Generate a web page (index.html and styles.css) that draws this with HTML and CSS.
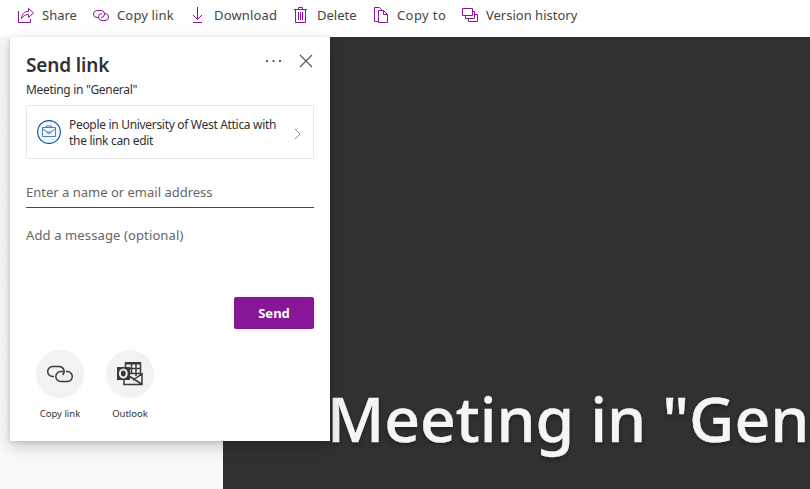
FILE: index.html
```html
<!DOCTYPE html>
<html lang="en">
<head>
<meta charset="utf-8">
<title>Send link</title>
<link rel="stylesheet" href="styles.css">
</head>
<body>
<nav class="toolbar">
  <a class="tool"><svg viewBox="0 0 16 16"><path d="M.5 4v11.500h12V12M3.500 11.500C4 7 6 4.500 10.500 4.500V1.500L15.500 6l-5 4.500v-3C7.500 7.500 5.500 8.500 3.500 11.500z"/></svg><span>Share</span></a>
  <a class="tool"><svg viewBox="0 0 16 16"><path d="M5 10.500H4A3.500 3.500 0 0 1 4 3.500h4a3.500 3.500 0 0 1 0 7M11 6.500h1a3.500 3.500 0 0 1 0 7H9a3.500 3.500 0 0 1 0-7"/></svg><span class="t-link">Copy link</span></a>
  <a class="tool"><svg viewBox="0 0 16 16"><path d="M7.500 0v12M3 8l4.500 4.500L12 8M3 15.500h9"/></svg><span class="t-link">Download</span></a>
  <a class="tool"><svg viewBox="0 0 16 16"><path d="M1 2.500h13M5.500 2.500v-2h4v2M2.500 2.500v13h10v-13M5.500 5v8M7.500 5v8M9.500 5v8"/></svg><span>Delete</span></a>
  <a class="tool"><svg viewBox="0 0 16 16"><path d="M5 14.500H1.500V.500h5l3 3M5.500 3.500h5l4 4v8h-9zM10.500 3.500v4h4"/></svg><span class="t-copy">Copy to</span></a>
  <a class="tool"><svg viewBox="0 0 16 16"><path d="M.5 1.500h10v7H.5zM3.500 8.500v3h9v-7h-2M6.500 11.500v3h9v-7h-3"/></svg><span>Version history</span></a>
</nav>
<main class="stage">
  <section class="preview"><h1 class="preview-title">Meeting in "Gen</h1></section>
  <section class="dialog">
    <header class="dialog-head">
      <h2 class="title">Send link</h2>
      <svg class="more" viewBox="0 0 16 4"><path d="M0 1h2v2H0zM6.500 1h2v2h-2zM13 1h2v2h-2z"/></svg>
      <svg class="close" viewBox="0 0 14 14"><path d="M1 1l12 12M13 1L1 13"/></svg>
    </header>
    <p class="file">Meeting in "General"</p>
    <div class="scope">
      <svg class="badge" viewBox="0 0 24 24"><circle cx="12" cy="12" r="11.400"/><path d="M5.500 7.500h13v9h-13zM9.500 7.500V6h5v1.500M5.500 8.500L10 12h4l4.500-3.500M10 12c0 2 4 2 4 0"/></svg>
      <p class="scope-text">People in University of West Attica with<br>the link can edit</p>
      <svg class="chevron" viewBox="0 0 7 12"><path d="M1 1l5 5-5 5"/></svg>
    </div>
    <div class="field">Enter a name or email address</div>
    <div class="message">Add a message (optional)</div>
    <button class="send">Send</button>
    <div class="actions">
      <div class="action">
        <span class="circle"><svg class="chain" viewBox="0 0 28 18"><path d="M8 11.500H6.700A5 5 0 0 1 6.700 1.500h6.500a5 5 0 0 1 3.500 8.500M20 6.500h1.300a5 5 0 0 1 0 10h-6.500a5 5 0 0 1 0-10H17"/></svg></span>
        <span>Copy link</span>
      </div>
      <div class="action">
        <span class="circle"><svg class="outlook" viewBox="0 0 28 24"><path class="line" d="M9.500 5V1h15v13M14 6.500h10M14 11.500h10M15.500 1v11M20 1v13M8 14v8.500h18V12l-9 6M13 14l12.500 8"/><path class="solid" d="M9 0h16v2.500H9zM1 5h13v13H1z"/><ellipse class="ring" cx="7.300" cy="11.500" rx="3.400" ry="4"/></svg></span>
        <span>Outlook</span>
      </div>
    </div>
  </section>
</main>
</body>
</html>
```
FILE: styles.css
```css
* { box-sizing: border-box; }
body { margin: 0; width: 810px; height: 489px; overflow: hidden; background: #fff; color: #323130; font-family: "Noto Sans", "Open Sans", sans-serif; }
h1, h2, p { margin: 0; font-weight: 400; }
svg { display: block; fill: none; flex: none; }
span { white-space: nowrap; }
.toolbar { height: 37px; padding: 7px 0 0 18px; display: grid; grid-template-columns: 75px 97px 103px 80px 89px 120px; align-items: start; font-size: 13px; line-height: 17px; }
.tool { display: flex; gap: 8px; color: #444; }
.tool svg { width: 16px; height: 16px; stroke: #881798; stroke-width: 1; }
.t-link { letter-spacing: .15px; }
.t-copy { letter-spacing: .4px; }
.stage { height: 452px; display: grid; grid-template-columns: 223px 587px; background: linear-gradient(#f7f6f4, #faf9f8); position: relative; }
.preview { grid-column: 2; background: #323032; overflow: hidden; padding: 333px 0 0 104px; }
.preview-title { color: #f5f5f6; font-size: 62.500px; line-height: 96px; font-weight: 500; letter-spacing: -.1px; white-space: nowrap; -webkit-text-stroke: .4px #f5f5f6; text-shadow: 0 2px 4px #202021; }
.dialog { position: absolute; left: 10px; top: 0; width: 320px; height: 404px; padding: 12px 16px; background: #fff; box-shadow: 0 6px 14px rgba(0,0,0,.18), 0 1px 4px rgba(0,0,0,.14); }
.dialog-head { display: flex; height: 32px; align-items: center; }
.title { font-size: 19px; font-weight: 600; line-height: 32px; flex: 1; white-space: nowrap; letter-spacing: -.15px; }
.more { width: 16px; height: 4px; margin: -8px 17px 0 0; fill: #605e5c; }
.close { width: 14px; height: 14px; margin: -8px 1px 0 0; stroke: #555; stroke-width: 1.1; }
.file { font-size: 12px; line-height: 17px; letter-spacing: -.32px; }
.scope { margin-top: 7px; height: 54px; border: 1px solid #e6e6e6; border-radius: 2px; display: flex; align-items: center; padding: 0 12px 0 10px; }
.badge { width: 24px; height: 24px; stroke: #0b5394; fill: #eff6fc; stroke-width: 1.1; }
.badge path { stroke-width: .9; stroke: #3b73a8; }
.scope-text { margin: 2px 0 0 8px; font-size: 12px; line-height: 16px; letter-spacing: -.31px; flex: 1; white-space: nowrap; }
.chevron { width: 7px; height: 12px; margin-top: 4px; stroke: #8a8886; }
.field { margin-top: 17px; height: 32px; border-bottom: 1px solid #881798; font-size: 13px; line-height: 33px; color: #666; }
.message { height: 56px; font-size: 13px; line-height: 54px; letter-spacing: .12px; color: #666; }
.send { display: block; margin: 33px 0 0 auto; width: 80px; height: 32px; border: 0; border-radius: 2px; background: #881798; color: #fff; font: 700 13px/32px "Noto Sans", sans-serif; padding: 0; }
.actions { display: flex; gap: 22px; padding: 21px 0 0 10px; }
.action { width: 48px; display: flex; flex-direction: column; align-items: center; font-size: 9.500px; line-height: 14px; }
.circle { width: 48px; height: 48px; border-radius: 50%; background: #f3f2f1; display: flex; align-items: center; justify-content: center; margin-bottom: 9px; }
.chain { width: 28px; height: 18px; stroke: #3b3a39; stroke-width: 1.500; }
.outlook { width: 28px; height: 24px; }
.line { stroke: #3b3a39; stroke-width: 1.500; }
.solid { fill: #3b3a39; }
.ring { stroke: #f3f2f1; stroke-width: 2; }
```
